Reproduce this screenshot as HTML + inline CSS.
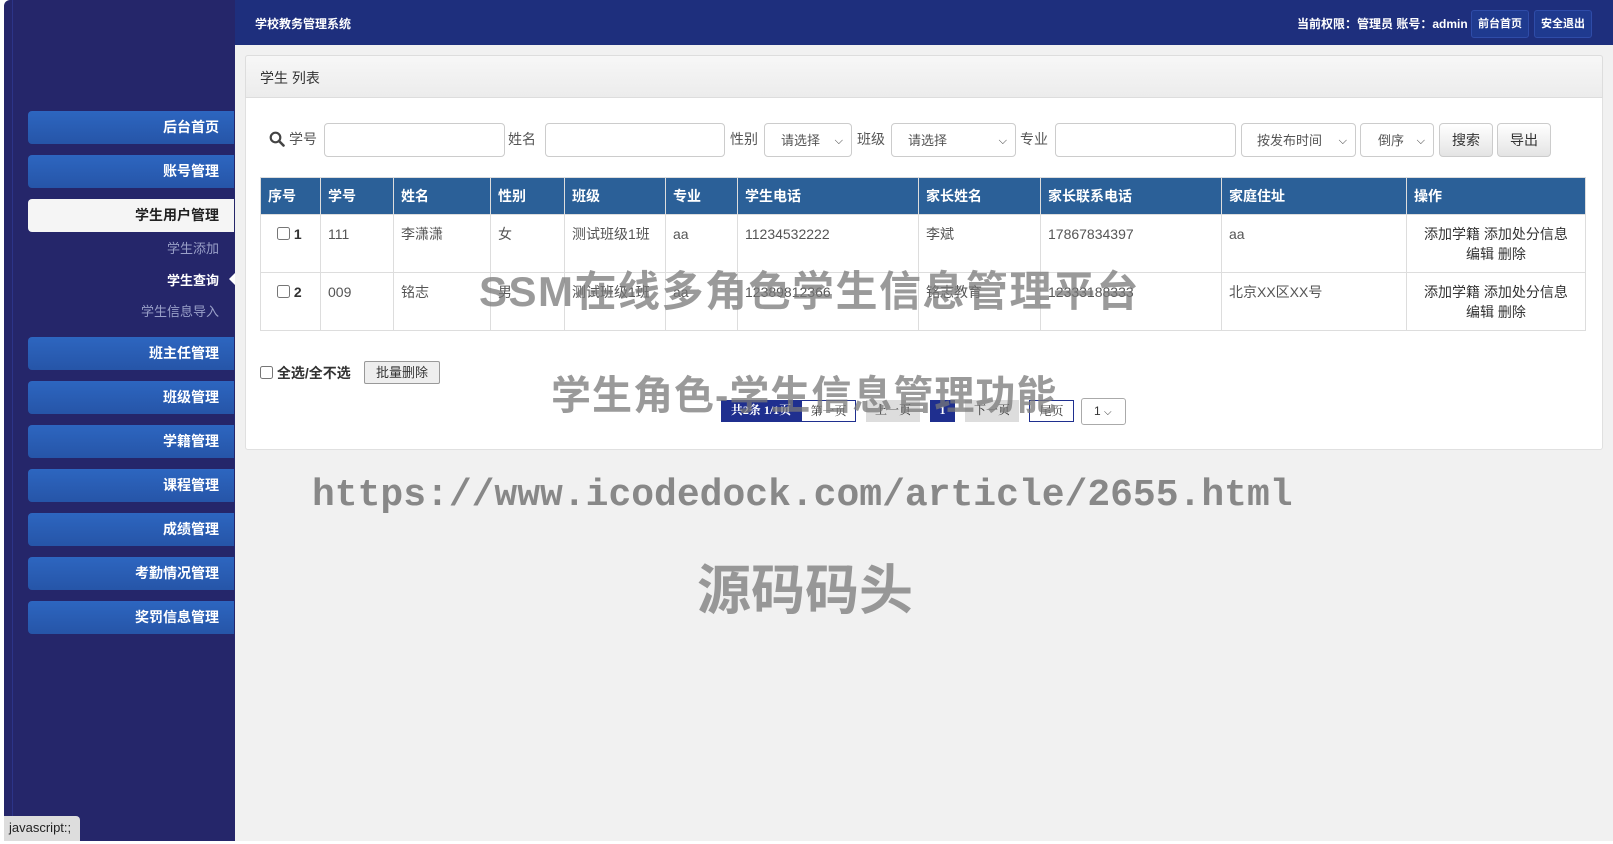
<!DOCTYPE html>
<html><head><meta charset="utf-8"><style>
*{box-sizing:border-box;margin:0;padding:0}
body{width:1613px;height:844px;background:#fff;font-family:"Liberation Sans","Noto Sans CJK SC",sans-serif;position:relative;overflow:hidden;font-size:14px;color:#555}
.abs{position:absolute}
#side{left:4px;top:0;width:231px;height:841px;background:#25266a;border-radius:6px 0 0 0}
#side:before{content:"";position:absolute;left:8px;top:0;bottom:0;width:1px;background:#2c3488}
.nav{position:absolute;left:28px;width:206px;height:33px;background:linear-gradient(#2d66c0,#2655a8);border-radius:4px 0 0 4px;color:#fff;font-weight:bold;font-size:14px;text-align:right;padding-right:15px;line-height:33px}
.nav.act{background:#f5f5f5;color:#222}
#top{left:235px;top:0;width:1378px;height:45px;background:#1e2f7d}
#main{left:235px;top:45px;width:1378px;height:796px;background:#f1f1f1}
#panel{left:245px;top:55px;width:1358px;height:395px;background:#fff;border:1px solid #e0e0e0;border-radius:3px}
#ph{left:245px;top:55px;width:1358px;height:43px;background:linear-gradient(#f7f7f7,#ececec);border:1px solid #ddd;border-radius:3px 3px 0 0;font-size:14px;color:#333;padding:12px 14px}
.inp{position:absolute;top:123px;height:34px;border:1px solid #ccc;border-radius:4px;background:#fff;font-size:13px;color:#555;line-height:34px}
.inp i{position:absolute;right:8px;top:0;font-style:normal;font-size:11px;color:#333}
.lbl{position:absolute;top:129px;font-size:14px;color:#555}
.btn{position:absolute;top:123px;height:34px;border:1px solid #ccc;border-radius:4px;background:linear-gradient(#fff,#e4e4e4);font-size:14px;color:#333;text-align:center;line-height:32px}
table{position:absolute;left:260px;top:177px;border-collapse:collapse;width:1326px;font-size:14px}
th{background:#2b6098;color:#fff;text-align:left;height:37px;padding:0 7px;border:1px solid #ddd;font-weight:bold}
td{height:58px;vertical-align:top;padding:9px 7px 0;border:1px solid #ddd;color:#555;line-height:20px}
td.op{text-align:center;color:#333}
.wm{position:absolute;color:rgba(120,120,120,.75);font-weight:bold;white-space:nowrap}
.pg{position:absolute;top:400px;height:22px;font-family:"Liberation Serif","Noto Serif CJK SC",serif;font-size:12px;line-height:20px;text-align:center}
</style></head><body>
<div id="side" class="abs"></div>
<div class="nav" style="top:111px">后台首页</div>
<div class="nav" style="top:155px">账号管理</div>
<div class="nav act" style="top:199px">学生用户管理</div>
<div class="abs" style="left:120px;width:99px;top:238px;text-align:right;font-size:13px;color:#9aa0c8">学生添加</div>
<div class="abs" style="left:120px;width:99px;top:270px;text-align:right;font-size:13px;color:#fff;font-weight:bold">学生查询</div>
<div class="abs" style="left:229px;top:273px;width:0;height:0;border:6px solid transparent;border-right-color:#fff;border-left:0"></div>
<div class="abs" style="left:100px;width:119px;top:301px;text-align:right;font-size:13px;color:#9aa0c8">学生信息导入</div>
<div class="nav" style="top:337px">班主任管理</div>
<div class="nav" style="top:381px">班级管理</div>
<div class="nav" style="top:425px">学籍管理</div>
<div class="nav" style="top:469px">课程管理</div>
<div class="nav" style="top:513px">成绩管理</div>
<div class="nav" style="top:557px">考勤情况管理</div>
<div class="nav" style="top:601px">奖罚信息管理</div>
<div class="abs" style="left:4px;top:816px;width:76px;height:25px;background:#ddd;border-radius:0 4px 0 0;font-size:13px;color:#222;padding:4px 5px">javascript:;</div>
<div id="top" class="abs"></div>
<div class="abs" style="left:255px;top:15px;color:#fff;font-size:12px;font-weight:bold">学校教务管理系统</div>
<div class="abs" style="left:1297px;top:15px;color:#fff;font-size:12px;font-weight:bold">当前权限：管理员 账号：admin</div>
<div class="abs" style="left:1471px;top:10px;width:58px;height:28px;background:#1f3a8f;border:1px solid #2f4ca8;border-radius:3px;color:#fff;font-size:11px;font-weight:bold;text-align:center;line-height:26px">前台首页</div>
<div class="abs" style="left:1534px;top:10px;width:58px;height:28px;background:#1f3a8f;border:1px solid #2f4ca8;border-radius:3px;color:#fff;font-size:11px;font-weight:bold;text-align:center;line-height:26px">安全退出</div>
<div id="main" class="abs"></div>
<div id="panel" class="abs"></div>
<div id="ph" class="abs">学生 列表</div>
<svg class="abs" style="left:269px;top:131px" width="16" height="16" viewBox="0 0 16 16"><circle cx="6.5" cy="6.5" r="4.8" fill="none" stroke="#444" stroke-width="2.2"/><path d="M10 10l4.5 4.5" stroke="#444" stroke-width="2.6" stroke-linecap="round"/></svg>
<div class="lbl" style="left:289px">学号</div>
<div class="inp" style="left:324px;width:181px"></div>
<div class="lbl" style="left:508px">姓名</div>
<div class="inp" style="left:545px;width:180px"></div>
<div class="lbl" style="left:730px">性别</div>
<div class="inp" style="left:764px;width:88px;padding-left:16px">请选择<i>&#x2335;</i></div>
<div class="lbl" style="left:857px">班级</div>
<div class="inp" style="left:891px;width:125px;padding-left:16px">请选择<i>&#x2335;</i></div>
<div class="lbl" style="left:1020px">专业</div>
<div class="inp" style="left:1055px;width:181px"></div>
<div class="inp" style="left:1241px;width:115px;padding-left:15px">按发布时间<i>&#x2335;</i></div>
<div class="inp" style="left:1360px;width:74px;padding-left:17px">倒序<i>&#x2335;</i></div>
<div class="btn" style="left:1439px;width:54px">搜索</div>
<div class="btn" style="left:1497px;width:54px">导出</div>
<table>
<tr><th style="width:60px">序号</th><th style="width:73px">学号</th><th style="width:97px">姓名</th><th style="width:74px">性别</th><th style="width:101px">班级</th><th style="width:72px">专业</th><th style="width:181px">学生电话</th><th style="width:122px">家长姓名</th><th style="width:181px">家长联系电话</th><th style="width:185px">家庭住址</th><th>操作</th></tr>
<tr><td style="padding-left:16px;color:#333"><input type="checkbox" style="width:13px;height:13px;vertical-align:-1px"> <b>1</b></td><td>111</td><td>李潇潇</td><td>女</td><td>测试班级1班</td><td>aa</td><td>11234532222</td><td>李斌</td><td>17867834397</td><td>aa</td><td class="op">添加学籍 添加处分信息<br>编辑 删除</td></tr>
<tr><td style="padding-left:16px;color:#333"><input type="checkbox" style="width:13px;height:13px;vertical-align:-1px"> <b>2</b></td><td>009</td><td>铭志</td><td>男</td><td>测试班级1班</td><td>aa</td><td>12389812366</td><td>铭志教育</td><td>12333188333</td><td>北京XX区XX号</td><td class="op">添加学籍 添加处分信息<br>编辑 删除</td></tr>
</table>
<div class="abs" style="left:260px;top:363px;font-size:14px;color:#333;font-weight:bold"><input type="checkbox" style="width:13px;height:13px;vertical-align:-1px"> 全选/全不选</div>
<div class="abs" style="left:364px;top:361px;width:76px;height:23px;border:1px solid #999;border-radius:2px;background:#eee;font-size:13px;text-align:center;line-height:21px;color:#333">批量删除</div>
<div class="pg" style="left:721px;width:80px;background:#1f2f8f;color:#fff;font-weight:bold">共2条 1/1页</div>
<div class="pg" style="left:801px;width:55px;border:1px solid #1f2f8f;background:#fff;color:#333">第一页</div>
<div class="pg" style="left:866px;width:54px;background:#ddd;color:#333">上一页</div>
<div class="pg" style="left:930px;width:25px;background:#1f2f8f;color:#fff;font-weight:bold">1</div>
<div class="pg" style="left:965px;width:54px;background:#ddd;color:#333">下一页</div>
<div class="pg" style="left:1029px;width:45px;border:1px solid #1f2f8f;background:#fff;color:#333">尾页</div>
<div class="abs" style="left:1081px;top:398px;width:45px;height:27px;border:1px solid #aaa;border-radius:3px;background:#fff;font-size:12px;line-height:25px;padding-left:12px;color:#333">1 <span style="font-size:10px">&#x2335;</span></div>
<div class="wm" style="left:479px;top:258px;font-size:42px;letter-spacing:1.5px">SSM在线多角色学生信息管理平台</div>
<div class="wm" style="left:551px;top:363px;font-size:40px;letter-spacing:1px">学生角色-学生信息管理功能</div>
<div class="wm" style="left:312px;top:474px;font-size:38px;font-family:'Liberation Mono','DejaVu Sans Mono',monospace;color:rgba(110,110,110,.8)">https://www.icodedock.com/article/2655.html</div>
<div class="wm" style="left:697px;top:546px;font-size:54px">源码码头</div>
</body></html>
